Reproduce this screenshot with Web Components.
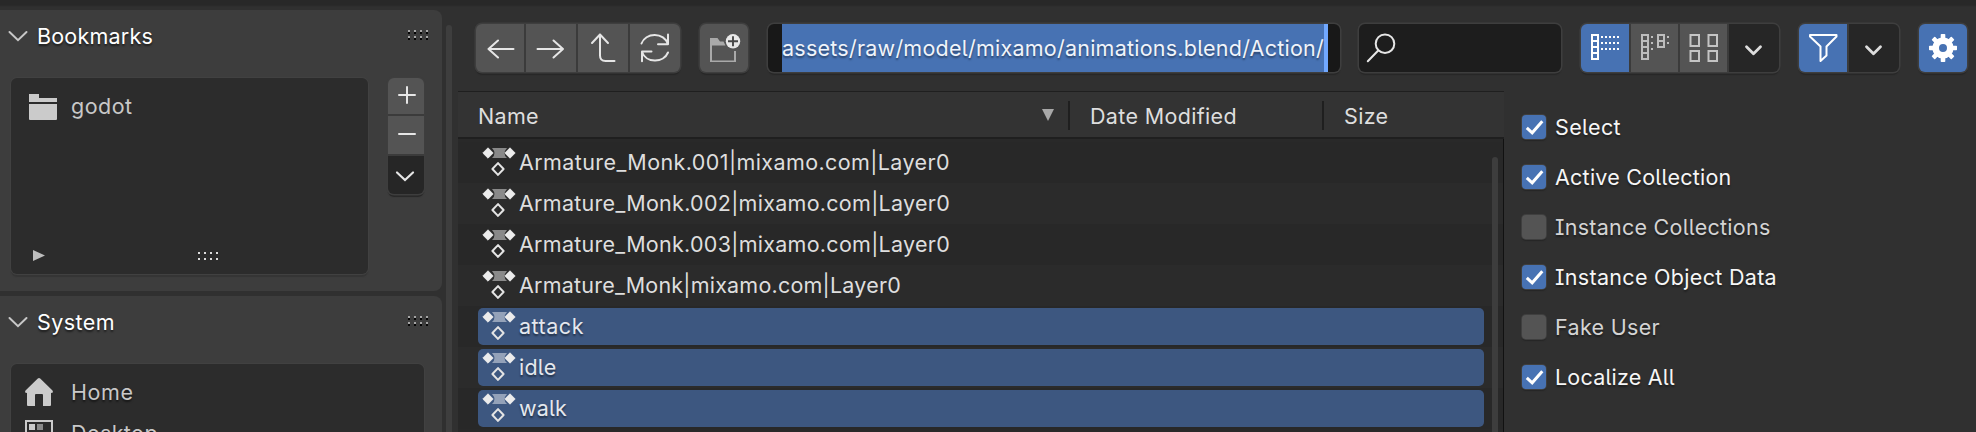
<!DOCTYPE html>
<html lang="en"><head><meta charset="utf-8"><title>File Browser</title>
<style>html,body{margin:0;height:100%;overflow:hidden;background:#303030}</style></head>
<body><file-browser></file-browser>
<script>
const define=(name,html,setup)=>customElements.define(name,class extends HTMLElement{
  connectedCallback(){
    if(this.shadowRoot)return;
    const t=document.createElement('template');t.innerHTML=html;
    this.attachShadow({mode:'open'}).append(t.content.cloneNode(true));
    if(setup)setup.call(this,this.shadowRoot);
  }
});

/* Text label; w is the advance width that the label is tracked to. */
define('ui-text',`<style>:host{display:block;white-space:pre;line-height:30px;height:30px}span{display:inline-block}</style><span><slot></slot></span>`,function(r){
  const w=+this.getAttribute('w'),s=r.querySelector('span');
  if(w)s.style.letterSpacing=((w-s.getBoundingClientRect().width)/this.textContent.length)+'px';
});

const L='fill="none" stroke="#e6e6e6" stroke-width="2" stroke-linecap="round" stroke-linejoin="round"';
const cells=(x,n,c)=>`<g fill="none" stroke="${c}" stroke-width="2">`+Array.from({length:n},(_,i)=>`<rect x="${x+1}" y="${11+i*6}" width="6" height="6"/>`).join('')+'</g>';
const dots=(xs,ys,c)=>ys.map(y=>xs.map(x=>`<rect x="${x}" y="${y}" width="2" height="2" fill="${c}"/>`).join('')).join('');
const icons={
 back:[48,48,`<path ${L} d="M12.5 25H37.5M22 16.5L12.5 25L22 33.5"/>`],
 forward:[50,48,`<path ${L} d="M11.5 25H37M27.5 16.5L37 25L27.5 33.5"/>`],
 up:[50,48,`<path ${L} d="M14 19L22 10.5L30 19M22 10.5V31.500Q22 37 27.500 37H36.500"/>`],
 refresh:[50,48,`<path ${L} d="M11.500 19.500A13.800 12.500 0 0 1 37.800 19.800M38 10.500V20.200H28M38 28.500A13.800 12.500 0 0 1 12 28M12 37.200V27.500H21.500"/>`],
 newfolder:[48,48,`<path fill="#a9a9a9" d="M10 14H17.500L20 17.500H23.500L25.500 21.500H12V36.500H34V27H36V38H10Z"/><circle cx="33" cy="17.300" r="7.200" fill="#e8e8e8"/><path stroke="#484848" stroke-width="1.900" d="M33 12.300V22.300M28 17.300H38"/>`],
 search:[48,48,`<g ${L}><circle cx="26" cy="19.700" r="9.300"/><path d="M19.200 26.500L8.800 37.200"/></g>`],
 listv:[48,48,cells(10,4,'#fff')+dots([20,24,28,32,36],[12,18,24],'#fff')],
 listh:[47,48,cells(10,4,'#bdbdbd')+cells(26,2,'#bdbdbd')+dots([20],[12,18,24],'#bdbdbd')+dots([36],[12,18],'#bdbdbd')],
 thumbs:[47,48,`<g fill="none" stroke="#c4c4c4" stroke-width="2"><rect x="10.500" y="11" width="8.500" height="11"/><rect x="28.500" y="11" width="8.500" height="11"/><rect x="10.500" y="27" width="8.500" height="10"/><rect x="28.500" y="27" width="8.500" height="10"/></g>`],
 drop:[50,48,`<path fill="none" stroke="#dcdcdc" stroke-width="2.800" stroke-linecap="round" stroke-linejoin="round" d="M17.500 22.700L24.500 29.800L31.500 22.700"/>`],
 filter:[48,48,`<path fill="none" stroke="#fff" stroke-width="2" stroke-linejoin="round" d="M11 11H37.500V12.500L27.500 22.500V31.500L21.500 37V22.500L11 12.500Z"/>`],
 gear:[48,48,`<g fill="#fff"><circle cx="24" cy="24" r="7.300" fill="none" stroke="#fff" stroke-width="6.600"/>${[0,45,90,135,180,225,270,315].map(a=>`<rect x="21.700" y="10" width="4.600" height="6" rx=".8" transform="rotate(${a} 24 24)"/>`).join('')}</g>`],
 action:[36,30,`<path fill="#fff" fill-opacity=".45" d="M10 2H25Q20 7.500 25 12H10Q15 7.500 10 2Z"/><g fill="#ececec"><path d="M6 1.800L11.200 7L6 12.200L.8 7Z" stroke="#ececec" stroke-width=".8" stroke-linejoin="round"/><path d="M28 1.800L33.200 7L28 12.200L22.800 7Z" stroke="#ececec" stroke-width=".8" stroke-linejoin="round"/></g><path fill="none" stroke="#e4e4e4" stroke-width="2" stroke-linejoin="round" d="M16 17.100L21.600 23L16 28.900L10.400 23Z"/>`],
 chev:[20,12,`<path fill="none" stroke="#c8c8c8" stroke-width="2" stroke-linecap="round" d="M1.500 2L10 10.200L18.500 2"/>`],
 chevw:[36,38,`<path fill="none" stroke="#e6e6e6" stroke-width="2.200" stroke-linecap="round" d="M9 16.500L17 24L25 16.500"/>`],
 plus:[36,36,`<path ${L} d="M11 17H27M19 9V25"/>`],
 minus:[36,38,`<path ${L} d="M11 18H27"/>`],
 folder:[28,26,`<path fill="#cbcbcb" d="M0 0H10V4H28V8H0ZM0 10H28V25Q28 26 27 26H1Q0 26 0 25Z"/>`],
 home:[28,28,`<path fill="#cbcbcb" d="M12.800 .5Q14 -.4 15.200 .5L27.500 12.500Q28.800 15 26 15V27Q26 28 25 28H18V17Q18 16 17 16H11Q10 16 10 17V28H3Q2 28 2 27V15Q-.8 15 .5 12.500Z"/>`],
 desktop:[28,28,`<rect x="1" y="1" width="26" height="24" fill="none" stroke="#cbcbcb" stroke-width="2"/><rect x="4" y="4" width="6" height="6" fill="#cbcbcb"/><rect x="12" y="4" width="6" height="6" fill="#8a8a8a"/>`],
 grip:[20,12,dots([0,6,12,18],[2,8],'#050505')+dots([0,6,12,18],[0,6],'#a5a5a5')],
 gripw:[20,8,dots([0,6,12,18],[0,6],'#dcdcdc')],
 play:[12,12,`<path fill="#bdbdbd" d="M0 0L12 5.500L0 11Z"/>`],
 sort:[12,12,`<path fill="#a8a8a8" d="M0 0H12L6 12Z"/>`],
 check:[24,24,`<path fill="none" stroke="#fff" stroke-width="3" d="M4.800 12.800L10.200 17.800L20.300 6.200"/>`]
};
define('ui-icon',`<style>:host{display:block;flex:none}svg{display:block;overflow:visible}</style>`,function(r){
  const [w,h,b]=icons[this.getAttribute('name')];
  const t=document.createElement('template');
  t.innerHTML=`<svg width="${w}" height="${h}" viewBox="0 0 ${w} ${h}">${b}</svg>`;r.append(t.content);
});

/* Row or column of joined buttons. */
define('ui-group',`<style>:host{display:flex;gap:2px;flex:none;background:#3b3b3b;border-radius:6px;overflow:clip;box-shadow:0 0 0 1.500px #3e3e3e,0 3px 1px #272727}:host([vertical]){flex-direction:column}</style><slot></slot>`);
define('ui-button',`<style>:host{display:block;flex:none;background:#545454}:host([on]){background:#4772b3}:host([dark]){background:#262626}</style>`,function(r){
  const n=document.createElement('ui-icon');n.setAttribute('name',this.getAttribute('icon'));r.append(n);
});

define('path-field',`<style>
:host{display:flex;box-sizing:border-box;width:572px;height:48px;padding:0 12px 0 14px;background:#181818;border-radius:6px;box-shadow:0 0 0 1.500px #3e3e3e,0 3px 1px #272727;flex:none}
div{flex:1;background:#4772b3;border-right:4px solid #71a8ff;padding-top:9px;color:#f0f4fa;text-shadow:0 2px 2px #0006}
</style><div><ui-text w="542">assets/raw/model/mixamo/animations.blend/Action/</ui-text></div>`);
define('search-field',`<style>:host{display:block;width:202px;height:48px;background:#1d1d1d;border-radius:6px;box-shadow:0 0 0 1.500px #3e3e3e,0 3px 1px #272727;flex:none}</style><ui-icon name="search"></ui-icon>`);

define('tool-bar',`<style>:host{display:flex;gap:20px;height:48px;padding:24px 0 19px 19px}path-field{margin-right:-1px}</style>
<ui-group><ui-button icon="back"></ui-button><ui-button icon="forward"></ui-button><ui-button icon="up"></ui-button><ui-button icon="refresh"></ui-button></ui-group>
<ui-group><ui-button icon="newfolder"></ui-button></ui-group>
<path-field></path-field><search-field></search-field>
<ui-group><ui-button icon="listv" on></ui-button><ui-button icon="listh"></ui-button><ui-button icon="thumbs"></ui-button><ui-button icon="drop" dark></ui-button></ui-group>
<ui-group><ui-button icon="filter" on></ui-button><ui-button icon="drop" dark></ui-button></ui-group>
<ui-group><ui-button icon="gear" on></ui-button></ui-group>`);

define('side-panel',`<style>
:host{display:block;box-sizing:border-box;width:442px;background:#3d3d3d;border-radius:0 8px 8px 0;padding-left:11px;flex:none}
header{display:flex;align-items:flex-start;height:68px;color:#fff;text-shadow:0 2px 2px #0008}
header ui-icon:first-child{margin:20px 0 0 -3px}
header div{margin:11px auto 0 9px}
header ui-icon:last-child{margin:20px 14px 0 0}
</style><header><ui-icon name="chev"></ui-icon><div><slot name="title"></slot></div><ui-icon name="grip"></ui-icon></header><slot></slot>`);
define('list-box',`<style>:host{display:block;box-sizing:border-box;background:#2c2c2c;border-radius:6px;color:#c8c8c8;box-shadow:0 0 0 1px #414141,0 3px 1px #353535}</style><slot></slot>`);

define('side-bar',`<style>
:host{display:flex;width:457px;flex:none;padding-top:10px;box-sizing:border-box;overflow:hidden}
.col{display:flex;flex-direction:column;gap:5px;width:442px}
side-panel.a{height:281px}side-panel.b{height:200px}
.row{display:flex;gap:20px;align-items:flex-start}
.a list-box{width:357px;height:196px;display:flex;flex-direction:column;padding:13px 18px 0}
.item{display:flex}
.item ui-text{margin-left:14px}
.foot{display:flex;margin:auto 0 12px 4px;gap:153px;align-items:center}
.b list-box{width:413px;height:120px;padding:13px 14px 0}
.b .item{height:41px}
.b .item ui-text{margin-left:18px;text-shadow:0 2px 2px #0008}
.scroll{width:6px;margin:15px 0 0 4px;border-radius:3px 3px 0 0;background:#3e3e3e}
</style>
<div class="col">
<side-panel class="a"><ui-text slot="title" w="116">Bookmarks</ui-text>
<div class="row"><list-box><div class="item"><ui-icon name="folder" style="margin-top:3px"></ui-icon><ui-text w="61.500">godot</ui-text></div>
<div class="foot"><ui-icon name="play"></ui-icon><ui-icon name="gripw"></ui-icon></div></list-box>
<ui-group vertical><ui-button icon="plus"></ui-button><ui-button icon="minus"></ui-button><ui-button icon="chevw" dark></ui-button></ui-group></div></side-panel>
<side-panel class="b"><ui-text slot="title" w="78">System</ui-text>
<list-box><div class="item"><ui-icon name="home" style="margin-top:1px"></ui-icon><ui-text w="62.500">Home</ui-text></div>
<div class="item"><ui-icon name="desktop" style="margin-top:2px"></ui-icon><ui-text w="87">Desktop</ui-text></div></list-box></side-panel>
</div><div class="scroll"></div>`);

define('file-row',`<style>
:host{display:block;height:41px;padding:2px 20px;box-sizing:border-box;background:#2b2b2b;color:#dedede}
:host(:nth-child(odd)){background:#282828}
div{display:flex;height:37px;border-radius:5px;padding-left:4px}
:host([selected]) div{background:#3d5780;color:#e4e8ee;text-shadow:0 2px 2px #0007}
ui-icon{margin-top:2px}ui-text{margin:3px 0 0 1px}
</style><div><ui-icon name="action"></ui-icon><ui-text><slot></slot></ui-text></div>`);

define('file-list',`<style>
:host{display:block;width:1046px;flex:none;margin-left:1px;border-top:1px solid #1f1f1f;background:#292929}
header{display:flex;box-sizing:border-box;height:47px;background:#333;border-bottom:2px solid #1f1f1f;color:#dedede;padding:9px 0 0 20px}
header ui-icon{margin:8px 14px 0 auto}
header .n{display:flex;width:590px}
header .c{box-sizing:border-box;width:254px;height:29px;border-left:2px solid #1f1f1f;padding-left:20px}
.body{display:flex;height:295px;overflow:hidden}
.rows{width:1046px;padding-top:3px;flex:none}
.scroll{width:6px;margin:18px 0 0 -12px;background:#3d3d3d;border-radius:3px 3px 0 0}
.edge{width:1px;background:#111;margin-left:5px}
</style>
<header><div class="n"><ui-text w="61">Name</ui-text><ui-icon name="sort"></ui-icon></div><div class="c"><ui-text w="147">Date Modified</ui-text></div><div class="c" style="width:180px"><ui-text w="44.500">Size</ui-text></div></header>
<div class="body"><div class="rows"><file-row><ui-text w="431">Armature_Monk.001|mixamo.com|Layer0</ui-text></file-row><file-row><ui-text w="431">Armature_Monk.002|mixamo.com|Layer0</ui-text></file-row><file-row><ui-text w="431">Armature_Monk.003|mixamo.com|Layer0</ui-text></file-row><file-row><ui-text w="382">Armature_Monk|mixamo.com|Layer0</ui-text></file-row><file-row selected><ui-text w="65">attack</ui-text></file-row><file-row selected><ui-text w="37.500">idle</ui-text></file-row><file-row selected><ui-text w="48">walk</ui-text></file-row></div><div class="scroll"></div><div class="edge"></div></div>`);

define('check-option',`<style>
:host{display:flex;height:50px;gap:9px;color:#d4d4d4;text-shadow:0 2px 2px #0006;align-items:flex-start}
:host([checked]){color:#f6f6f6}
.box{width:24px;height:24px;border-radius:4px;background:#545454;box-shadow:0 0 0 1px #3f3f3f,0 2px 1px #262626}
:host([checked]) .box{background:#4772b3}
:host(:not([checked])) ui-icon{display:none}
ui-text{margin-top:-3px}
</style><div class="box"><ui-icon name="check"></ui-icon></div><ui-text><slot></slot></ui-text>`);
define('option-list',`<style>:host{display:block;padding:24px 0 0 18px;overflow:hidden}</style>
<check-option checked><ui-text w="66">Select</ui-text></check-option>
<check-option checked><ui-text w="176.500">Active Collection</ui-text></check-option>
<check-option><ui-text w="215.500">Instance Collections</ui-text></check-option>
<check-option checked><ui-text w="222">Instance Object Data</ui-text></check-option>
<check-option><ui-text w="105">Fake User</ui-text></check-option>
<check-option checked><ui-text w="120">Localize All</ui-text></check-option>`);

define('file-browser',`<style>
:host{display:flex;width:1976px;height:432px;overflow:hidden;background:linear-gradient(#282828 5px,#303030 7px);font:21.500px Inter,"Noto Sans",sans-serif;font-feature-settings:"cv05","cv08"}
.main{flex:1}.content{display:flex}
</style><side-bar></side-bar><div class="main"><tool-bar></tool-bar><div class="content"><file-list></file-list><option-list></option-list></div></div>`);
</script></body></html>
